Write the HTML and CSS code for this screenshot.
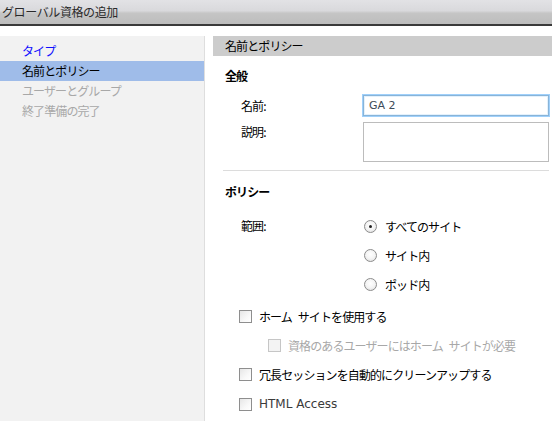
FILE: index.html
```html
<!DOCTYPE html>
<html lang="ja">
<head>
<meta charset="utf-8">
<title>グローバル資格の追加</title>
<link rel="stylesheet" href="styles.css">
</head>
<body>
<div class="titlebar">グローバル資格の追加</div>
<div class="main">
  <nav class="sidebar">
    <div class="nav-item link">タイプ</div>
    <div class="nav-item selected">名前とポリシー</div>
    <div class="nav-item disabled">ユーザーとグループ</div>
    <div class="nav-item disabled">終了準備の完了</div>
  </nav>
  <section class="content">
    <div class="pane-header">名前とポリシー</div>
    <div class="section-title">全般</div>
    <div class="form-row">
      <label class="label">名前:</label>
      <input class="text-input" type="text" value="GA 2">
    </div>
    <div class="form-row desc-row">
      <label class="label">説明:</label>
      <textarea class="text-area"></textarea>
    </div>
    <div class="separator"></div>
    <div class="section-title policy-title">ポリシー</div>
    <div class="radio-group">
      <div class="label scope-label">範囲:</div>
      <div class="radios">
        <label class="option"><input type="radio" name="scope" checked><span>すべてのサイト</span></label>
        <label class="option"><input type="radio" name="scope"><span>サイト内</span></label>
        <label class="option"><input type="radio" name="scope"><span>ポッド内</span></label>
      </div>
    </div>
    <div class="checks">
      <label class="check"><input type="checkbox"><span>ホーム サイトを使用する</span></label>
      <label class="check sub disabled"><input type="checkbox" disabled><span>資格のあるユーザーにはホーム サイトが必要</span></label>
      <label class="check"><input type="checkbox"><span>冗長セッションを自動的にクリーンアップする</span></label>
      <label class="check latin"><input type="checkbox"><span>HTML Access</span></label>
    </div>
  </section>
</div>
</body>
</html>
```
FILE: styles.css
```css
* { box-sizing: border-box; }
html, body { margin: 0; padding: 0; }
body {
  width: 552px;
  height: 421px;
  overflow: hidden;
  background: #ffffff;
  font-family: "Noto Sans CJK JP", "Noto Sans", sans-serif;
  font-size: 12px;
  letter-spacing: -0.9px;
  word-spacing: 4px;
  color: #000;
}
.titlebar {
  height: 26px;
  line-height: 24px;
  padding-left: 2px;
  font-size: 12px;
  letter-spacing: -0.4px;
  color: #2a2a2a;
  background: linear-gradient(#e2e2e5 0%, #d9d9dc 45%, #c5c5c5 55%, #bdbdbd 100%);
  border-bottom: 2px solid #3a3a3a;
}
.main {
  display: flex;
  margin-top: 10px;
  height: 385px;
}
.sidebar {
  width: 205px;
  flex: none;
  background: #f2f2f2;
  border-right: 1px solid #dedede;
  padding-top: 5px;
}
.nav-item {
  height: 20px;
  line-height: 20px;
  padding-left: 22px;
  white-space: nowrap;
}
.nav-item.link { color: #1010ff; }
.nav-item.selected { background: #9fbce9; color: #000; }
.nav-item.disabled { color: #a8a8a8; }
.content {
  flex: 1;
  margin-left: 8px;
  display: flex;
  flex-direction: column;
}
.pane-header {
  height: 20px;
  line-height: 20px;
  padding-left: 12px;
  background: #cccccc;
}
.section-title {
  margin-top: 10px;
  height: 20px;
  line-height: 20px;
  padding-left: 12px;
  font-weight: bold;
}
.form-row {
  display: grid;
  grid-template-columns: 150px 1fr;
  margin-top: 9px;
  margin-right: 3px;
  align-items: center;
}
.label { padding-left: 28px; white-space: nowrap; }
.text-input {
  height: 21px;
  margin: 0;
  padding: 0 5px;
  border: 1px solid #88b4d8;
  box-shadow: 0 0 0 1px #9fd0fb, inset 0 0 0 1px #e4f1fc;
  font-family: "DejaVu Sans", sans-serif;
  font-size: 11px;
  letter-spacing: 0;
  word-spacing: 0;
  color: #3d4b58;
  outline: none;
  width: 100%;
}
.desc-row { margin-top: 6px; align-items: start; }
.desc-row .label { padding-top: 1px; }
.text-area {
  height: 40px;
  width: 100%;
  border: 1px solid #bcbcbc;
  resize: none;
  margin: 0;
  display: block;
}
.separator {
  margin: 8px 3px 0 10px;
  border-top: 1px solid #dcdcdc;
}
.policy-title { margin-top: 11px; }
.radio-group {
  display: grid;
  grid-template-columns: 150px 1fr;
  margin-top: 14px;
}
.scope-label { height: 20px; line-height: 20px; }
.radios { display: flex; flex-direction: column; gap: 9px; }
.option, .check {
  display: flex;
  align-items: center;
  height: 20px;
  white-space: nowrap;
}
.option input[type="radio"] {
  appearance: none;
  -webkit-appearance: none;
  width: 13px;
  height: 13px;
  margin: 0 8px 0 1px;
  border-radius: 50%;
  border: 1px solid #8c8c8c;
  background: radial-gradient(circle at 50% 40%, #ffffff 0%, #f4f4f4 50%, #d9d9d9 100%);
  position: relative;
}
.option input[type="radio"]:checked::after {
  content: "";
  position: absolute;
  left: 4px;
  top: 4px;
  width: 3px;
  height: 3px;
  border-radius: 50%;
  background: #222;
}
.checks {
  display: flex;
  flex-direction: column;
  gap: 9px;
  margin-top: 12px;
  padding-left: 26px;
}
.check input[type="checkbox"] {
  appearance: none;
  -webkit-appearance: none;
  width: 13px;
  height: 13px;
  margin: 0 7px 0 0;
  border: 1px solid #8e8e8e;
  background: linear-gradient(135deg, #e6e6e6 0%, #f8f8f8 60%, #ffffff 100%);
}
.check.sub { padding-left: 29px; }
.check.disabled { color: #a8a8a8; }
.check.disabled input[type="checkbox"] {
  border-color: #c6c6c6;
  background: #f3f3f3;
}
.check.latin span {
  font-family: "DejaVu Sans", sans-serif;
  font-size: 12px;
  letter-spacing: 0;
  word-spacing: 0;
  color: #3a3a3a;
}
.check:last-child { margin-top: 1px; }
```
